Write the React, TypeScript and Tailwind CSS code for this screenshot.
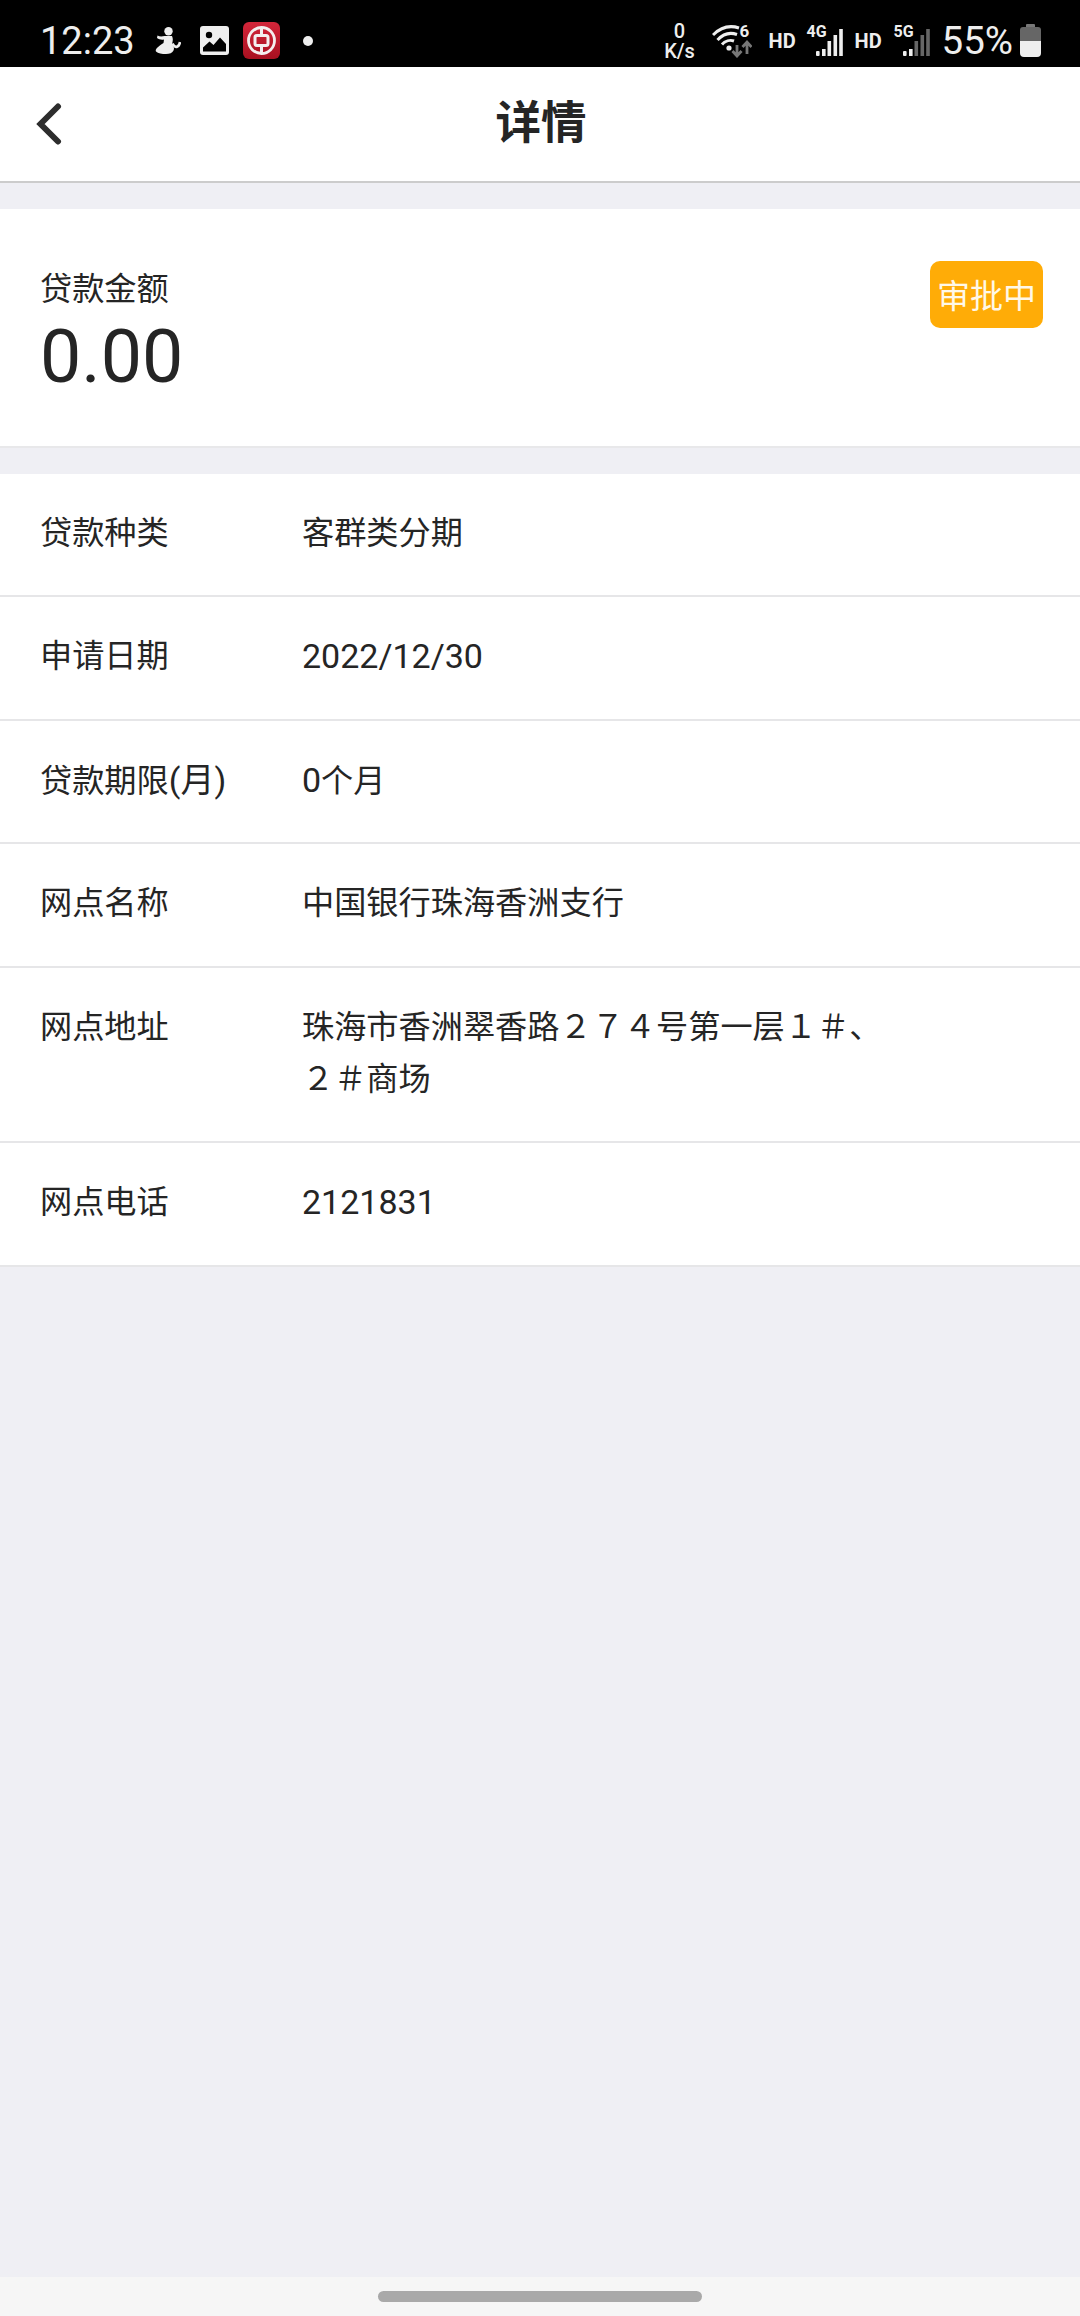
const font = { fontFamily: '"Roboto", "Noto Sans CJK SC", sans-serif' };

function Person() {
  return (
    <svg width="27" height="27" viewBox="0 0 27 27" fill="#eeeeee">
      <circle cx="14.5" cy="4.2" r="4.2" />
      <path d="M3.5 8.5 C6 10 8.5 9.5 10.5 9 L18 9 C19.2 11.5 19 14 18 17 C20 19.5 20.5 21.5 19.5 23.5 C18.5 26 15.5 27 12 27 C8 27 4 26.5 2 24.5 C0.8 22.5 4 19.5 9.5 16 L10 12.5 C7.5 13 5 12.5 3 11 Z" />
      <path d="M18.5 16.5 C21 21.5 25 21 26 15" fill="none" stroke="#eeeeee" strokeWidth="2.6" />
    </svg>
  );
}

function Picture() {
  return (
    <svg width="29" height="29" viewBox="0 0 29 29">
      <rect width="29" height="29" rx="3" fill="#eeeeee" />
      <circle cx="9" cy="9" r="3.2" fill="#000" />
      <path d="M3 25.5 L3 21.5 L9.5 15.5 L13.5 19 L20 11.5 L26 18 L26 25.5 Z" fill="#000" />
    </svg>
  );
}

function BocLogo() {
  return (
    <svg width="37" height="37" viewBox="0 0 37 37">
      <defs>
        <linearGradient id="boc" x1="0" y1="0" x2="0" y2="1">
          <stop offset="0" stopColor="#d3263a" />
          <stop offset="1" stopColor="#a81020" />
        </linearGradient>
      </defs>
      <rect width="37" height="37" rx="6" fill="url(#boc)" />
      <circle cx="18.5" cy="18.5" r="13" fill="none" stroke="#f4eeee" strokeWidth="2.8" />
      <rect x="12" y="13.5" width="13" height="10" rx="2" fill="none" stroke="#f4eeee" strokeWidth="3" />
      <rect x="17" y="5.5" width="3" height="8" fill="#f4eeee" />
      <rect x="17" y="23.5" width="3" height="8" fill="#f4eeee" />
    </svg>
  );
}

function Wifi() {
  return (
    <div className="relative h-[34px] w-[40px]">
      <svg width="40" height="34" viewBox="0 0 40 34" fill="none">
        <path d="M1 11 C9 3 18 1 27 4" stroke="#eee" strokeWidth="3" />
        <path d="M5.5 16 C11 10 18 8 25 10.5" stroke="#eee" strokeWidth="3" />
        <path d="M10 20.5 C13 17 18 15.5 22 17" stroke="#eee" strokeWidth="3" />
        <circle cx="17" cy="24" r="2.6" fill="#eee" />
        <path d="M25 21 V32 M20.5 27 L25 32 L29.5 27" stroke="#777" strokeWidth="2.8" />
        <path d="M35 30 V18 M30.5 23 L35 18 L39.5 23" stroke="#777" strokeWidth="2.8" />
      </svg>
      <span className="absolute left-[28px] top-[-2px] text-[17px] font-bold leading-[18px] text-[#eeeeee]">6</span>
    </div>
  );
}

function Signal({ label, bars }: { label: string; bars: string[] }) {
  return (
    <div className="relative h-[32px] w-[36px]">
      <span className="absolute left-0 top-[-2px] text-[16px] font-bold leading-[18px] text-[#eeeeee]">{label}</span>
      <svg className="absolute left-0 top-0" width="36" height="32" viewBox="0 0 36 32">
        <rect x="9" y="26" width="3.6" height="5" rx="1" fill={bars[0]} />
        <rect x="15" y="24" width="3.6" height="7" fill={bars[1]} />
        <rect x="20.5" y="16" width="3.6" height="15" fill={bars[2]} />
        <rect x="26.5" y="10" width="3.6" height="21" fill={bars[3]} />
        <rect x="32.2" y="4" width="3.6" height="27" fill={bars[4]} />
      </svg>
    </div>
  );
}

function Battery() {
  return (
    <svg width="21" height="33" viewBox="0 0 21 33">
      <rect x="6" y="0" width="9" height="4" rx="1" fill="#777" />
      <path d="M3 3 H18 A3 3 0 0 1 21 6 V17 H0 V6 A3 3 0 0 1 3 3 Z" fill="#666" />
      <path d="M0 17 H21 V29 A4 4 0 0 1 17 33 H4 A4 4 0 0 1 0 29 Z" fill="#eeeeee" />
    </svg>
  );
}

function Row({ label, children, h }: { label: React.ReactNode; children: React.ReactNode; h: string }) {
  return (
    <div className={`flex border-b-2 border-[#e6e6e8] pl-[40px] pt-[39px] text-[32.2px] leading-[40px] text-[#252525] ${h}`}>
      <div className="w-[262px] shrink-0">{label}</div>
      <div className="flex-1">{children}</div>
    </div>
  );
}

export default function App() {
  return (
    <div className="flex h-[2316px] w-[1080px] flex-col overflow-hidden bg-[#efeff4]" style={font}>
      <div className="flex h-[67px] shrink-0 items-center justify-between bg-black pl-[40px] pr-[39px] pt-[14px] text-[#eeeeee]">
        <div className="flex items-center">
          <span className="w-[114px] text-[38px] leading-[40px]">12:23</span>
          <Person />
          <div className="ml-[19px]"><Picture /></div>
          <div className="ml-[14px]"><BocLogo /></div>
          <span className="ml-[23px] h-[10px] w-[10px] rounded-full bg-[#eeeeee]" />
        </div>
        <div className="flex items-center">
          <div className="flex w-[30px] flex-col items-center text-[20px] font-medium leading-[20px]">
            <span>0</span>
            <span>K/s</span>
          </div>
          <div className="ml-[17px]"><Wifi /></div>
          <span className="ml-[17px] w-[26px] text-[20px] font-bold">HD</span>
          <div className="ml-[12px]"><Signal label="4G" bars={["#eee", "#eee", "#eee", "#eee", "#eee"]} /></div>
          <span className="ml-[12px] w-[26px] text-[20px] font-bold">HD</span>
          <div className="ml-[13px]"><Signal label="5G" bars={["#eee", "#eee", "#666", "#666", "#666"]} /></div>
          <span className="ml-[12px] text-[38.5px] leading-[40px]">55%</span>
          <div className="ml-[7px]"><Battery /></div>
        </div>
      </div>

      <div className="relative flex h-[116px] shrink-0 items-center justify-center border-b-2 border-[#cccccc] bg-white">
        <svg className="absolute left-[36px] top-[35px]" width="26" height="44" viewBox="0 0 26 44" fill="none">
          <path d="M22 4.5 L4.5 22 L22 39.5" stroke="#2d2d2d" strokeWidth="6" strokeLinecap="round" />
        </svg>
        <span className="pl-[2px] text-[45.5px] font-bold leading-[52px] text-[#252525]">详情</span>
      </div>

      <div className="relative mt-[26px] h-[239px] shrink-0 border-b-2 border-[#e8e8ea] bg-white pl-[40px] pt-[56px]">
        <div className="text-[32.2px] leading-[48px] text-[#252525]">贷款金额</div>
        <div className="text-[73.5px] leading-[88px] text-[#252525]">0.00</div>
        <div className="absolute right-[37px] top-[52px] flex h-[67px] w-[113px] items-center justify-center rounded-[10px] bg-[#ffac07] pt-[4px] text-[33px] text-[#fff8e8]">审批中</div>
      </div>

      <div className="mt-[26px] flex shrink-0 flex-col bg-white">
        <Row label="贷款种类" h="h-[123px]">客群类分期</Row>
        <Row label="申请日期" h="h-[124px]"><span className="text-[34px]">2022/12/30</span></Row>
        <Row label={<>贷款期限<span className="text-[34px]">(月)</span></>} h="h-[123px]"><span className="text-[34px]">0</span>个月</Row>
        <Row label="网点名称" h="h-[124px]">中国银行珠海香洲支行</Row>
        <Row label="网点地址" h="h-[175px]">
          <div className="mt-[-6px] w-[600px] leading-[52px]">珠海市香洲翠香路２７４号第一层１＃、２＃商场</div>
        </Row>
        <Row label="网点电话" h="h-[124px]"><span className="text-[34px]">2121831</span></Row>
      </div>

      <div className="flex-1" />
      <div className="flex h-[39px] shrink-0 justify-center bg-[#f6f6f6] pt-[14px]">
        <div className="h-[11px] w-[324px] rounded-full bg-[#a9a9a9]" />
      </div>
    </div>
  );
}
